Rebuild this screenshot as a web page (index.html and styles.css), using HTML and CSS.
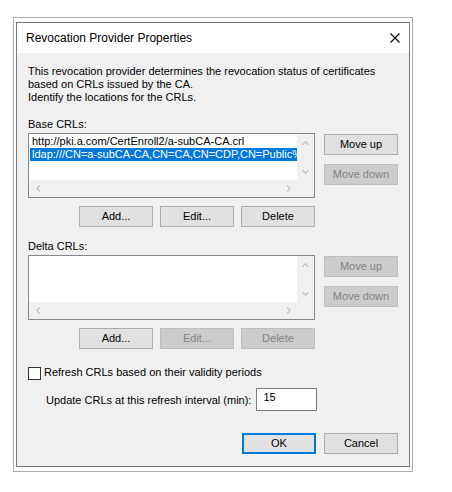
FILE: index.html
```html
<!DOCTYPE html>
<html>
    <head>
        <meta charset="utf-8">
        <title>Revocation Provider Properties</title>
        <link rel="stylesheet" href="styles.css">
    </head>
    <body>
        <div class="frame">
            <div class="window">
                <div class="titlebar">
                    <span class="title">Revocation Provider Properties</span>
                    <svg class="close" width="10" height="10" viewBox="0 0 10 10">
                        <path d="M0.5 0.5 L9.5 9.5 M9.5 0.5 L0.5 9.5" stroke="#000" stroke-width="1.1" fill="none"/>
                    </svg>
                </div>
                <div class="content">
                    <p class="intro">This revocation provider determines the revocation status of certificates<br>based on CRLs issued by the CA.<br>Identify the locations for the CRLs.</p>

                    <div class="label">Base CRLs:</div>
                    <div class="group">
                        <div class="group-main">
                            <div class="listbox">
                                <div class="items">
                                    <div class="item">http://pki.a.com/CertEnroll2/a-subCA-CA.crl</div>
                                    <div class="item selected">ldap:///CN=a-subCA-CA,CN=CA,CN=CDP,CN=Public%</div>
                                </div>
                                <div class="vscroll">
                                    <span class="arrow"><svg width="7" height="4" viewBox="0 0 7 4"><polyline points="0.5,3.8 3.5,0.8 6.5,3.8" fill="none" stroke="#bdbdbd" stroke-width="1.2"/></svg></span>
                                    <span class="arrow"><svg width="7" height="4" viewBox="0 0 7 4"><polyline points="0.5,0.2 3.5,3.2 6.5,0.2" fill="none" stroke="#bdbdbd" stroke-width="1.2"/></svg></span>
                                </div>
                                <div class="hscroll">
                                    <span class="arrow"><svg width="4" height="7" viewBox="0 0 4 7"><polyline points="3.8,0.5 0.8,3.5 3.8,6.5" fill="none" stroke="#bdbdbd" stroke-width="1.2"/></svg></span>
                                    <span class="arrow"><svg width="4" height="7" viewBox="0 0 4 7"><polyline points="0.2,0.5 3.2,3.5 0.2,6.5" fill="none" stroke="#bdbdbd" stroke-width="1.2"/></svg></span>
                                </div>
                                <div class="corner"></div>
                            </div>
                            <div class="btn-row">
                                <button class="btn">Add...</button>
                                <button class="btn">Edit...</button>
                                <button class="btn">Delete</button>
                            </div>
                        </div>
                        <div class="side">
                            <button class="btn">Move up</button>
                            <button class="btn" disabled>Move down</button>
                        </div>
                    </div>

                    <div class="label label-second">Delta CRLs:</div>
                    <div class="group">
                        <div class="group-main">
                            <div class="listbox">
                                <div class="items"></div>
                                <div class="vscroll">
                                    <span class="arrow"><svg width="7" height="4" viewBox="0 0 7 4"><polyline points="0.5,3.8 3.5,0.8 6.5,3.8" fill="none" stroke="#bdbdbd" stroke-width="1.2"/></svg></span>
                                    <span class="arrow"><svg width="7" height="4" viewBox="0 0 7 4"><polyline points="0.5,0.2 3.5,3.2 6.5,0.2" fill="none" stroke="#bdbdbd" stroke-width="1.2"/></svg></span>
                                </div>
                                <div class="hscroll">
                                    <span class="arrow"><svg width="4" height="7" viewBox="0 0 4 7"><polyline points="3.8,0.5 0.8,3.5 3.8,6.5" fill="none" stroke="#bdbdbd" stroke-width="1.2"/></svg></span>
                                    <span class="arrow"><svg width="4" height="7" viewBox="0 0 4 7"><polyline points="0.2,0.5 3.2,3.5 0.2,6.5" fill="none" stroke="#bdbdbd" stroke-width="1.2"/></svg></span>
                                </div>
                                <div class="corner"></div>
                            </div>
                            <div class="btn-row">
                                <button class="btn">Add...</button>
                                <button class="btn" disabled>Edit...</button>
                                <button class="btn" disabled>Delete</button>
                            </div>
                        </div>
                        <div class="side">
                            <button class="btn" disabled>Move up</button>
                            <button class="btn" disabled>Move down</button>
                        </div>
                    </div>

                    <label class="check"><span class="box"></span>Refresh CRLs based on their validity periods</label>
                    <div class="interval">
                        <span>Update CRLs at this refresh interval (min):</span>
                        <div class="textbox">15</div>
                    </div>

                    <div class="footer">
                        <button class="btn default">OK</button>
                        <button class="btn">Cancel</button>
                    </div>
                </div>
            </div>
        </div>
    </body>
</html>
```

FILE: styles.css
```css
body {
    margin: 0;
    background: #fff;
    font-family: "Liberation Sans", Arial, sans-serif;
    font-size: 11px;
    line-height: 13px;
    color: #000;
}
.frame {
    margin: 17px 0 0 13px;
    width: 400px;
    box-sizing: border-box;
    border: 1px solid #acacac;
    padding: 4px 2px;
    background: #fff;
}
.window {
    border: 1px solid #777;
}
.titlebar {
    height: 30px;
    display: flex;
    align-items: center;
    justify-content: space-between;
    padding: 0 9px;
    background: #fff;
}
.title {
    font-size: 12px;
    line-height: 30px;
}
.close {
    display: block;
}
.content {
    background: #f0f0f0;
    padding: 12px 11px 12px 11px;
}
.intro {
    margin: 0;
}
.label {
    margin-top: 14px;
}
.label-second {
    margin-top: 13px;
}
.group {
    display: flex;
    gap: 9px;
    margin-top: 2px;
}
.group-main {
    width: 287px;
}
.listbox {
    display: grid;
    grid-template-columns: 268px 17px;
    grid-template-rows: 46px 17px;
    height: 65px;
    box-sizing: border-box;
    border: 1px solid #828790;
    background: #fff;
}
.items {
    overflow: hidden;
    padding-top: 1px;
}
.item {
    height: 13px;
    margin-left: 1px;
    padding-left: 2px;
    white-space: nowrap;
    overflow: hidden;
}
.item.selected {
    background: #0078d7;
    color: #fff;
}
.vscroll {
    display: flex;
    flex-direction: column;
    justify-content: space-between;
    background: #f0f0f0;
}
.hscroll {
    display: flex;
    justify-content: space-between;
    background: #f0f0f0;
}
.corner {
    background: #f0f0f0;
}
.arrow {
    width: 17px;
    height: 17px;
    display: flex;
    align-items: center;
    justify-content: center;
}
.arrow svg {
    display: block;
}
.btn {
    width: 74px;
    height: 21px;
    box-sizing: border-box;
    padding: 0;
    border: 1px solid #adadad;
    background: #e1e1e1;
    color: #000;
    font-family: inherit;
    font-size: 11px;
    line-height: 13px;
}
.btn:disabled {
    background: #cccccc;
    border-color: #bfbfbf;
    color: #838383;
}
.btn.default {
    border: 2px solid #0078d7;
}
.btn-row {
    display: flex;
    justify-content: flex-end;
    gap: 7px;
    margin-top: 8px;
}
.side {
    display: flex;
    flex-direction: column;
    gap: 9px;
    padding-top: 1px;
}
.check {
    display: flex;
    align-items: center;
    gap: 3px;
    margin-top: 17px;
    height: 13px;
}
.box {
    width: 13px;
    height: 13px;
    box-sizing: border-box;
    border: 1px solid #333;
    background: #fff;
    margin-top: 1px;
}
.interval {
    display: flex;
    align-items: center;
    gap: 5px;
    margin-top: 9px;
    padding-left: 18px;
}
.interval span {
    padding-top: 2px;
}
.textbox {
    width: 61px;
    height: 23px;
    box-sizing: border-box;
    border: 1px solid #7a7a7a;
    background: #fff;
    padding: 2px 0 0 6px;
}
.footer {
    display: flex;
    justify-content: flex-end;
    gap: 8px;
    margin-top: 22px;
}
```
